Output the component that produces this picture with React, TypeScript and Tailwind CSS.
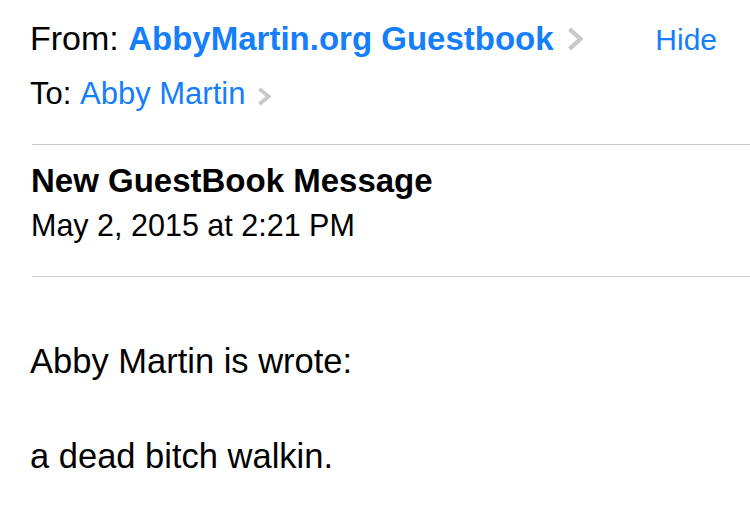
import React from 'react';

const Chevron: React.FC<{ w: number; h: number; stroke: number; className?: string }> = ({ w, h, stroke, className }) => (
  <svg viewBox={`0 0 ${w} ${h}`} className={className} fill="none" preserveAspectRatio="none">
    <path
      d={`M${stroke / 2 + 0.5} ${stroke / 2} L${w - stroke / 2 - 0.5} ${h / 2} L${stroke / 2 + 0.5} ${h - stroke / 2}`}
      stroke="#c7c7cc"
      strokeWidth={stroke}
    />
  </svg>
);

const App: React.FC = () => {
  return (
    <div className="w-[750px] h-[528px] bg-white overflow-hidden text-black font-['Liberation_Sans',Arial,sans-serif]">
      <div className="pl-[30px]">
        {/* sender row */}
        <div className="flex items-baseline justify-between pt-[18px] pr-[33px] h-[58px] leading-[40px]">
          <div className="flex items-baseline">
            <span className="text-[34px]">From:&nbsp;</span>
            <span className="text-[33px] font-bold text-[#147efb]">AbbyMartin.org Guestbook</span>
            <Chevron w={16} h={24} stroke={4.2} className="block w-[16px] h-[24px] min-w-[16px] shrink-0 ml-[13px] self-center" />
          </div>
          <span className="text-[30px] text-[#147efb]">Hide</span>
        </div>

        {/* recipient row */}
        <div className="flex items-baseline mt-[16px] h-[40px] leading-[40px]">
          <span className="text-[31px]">To:&nbsp;</span>
          <span className="text-[31px] text-[#147efb]">Abby Martin</span>
          <Chevron w={14} h={19} stroke={3.6} className="block w-[14px] h-[19px] min-w-[14px] shrink-0 ml-[12px] self-center translate-y-[2px]" />
        </div>
      </div>

      <div className="ml-[32px] mt-[30px] h-px bg-[#c8c7cc]" />

      <div className="pl-[31px]">
        <div className="mt-[16px] text-[33px] font-bold leading-[40px]">New GuestBook Message</div>
        <div className="mt-[4px] text-[30.5px] leading-[40px]">May 2, 2015 at 2:21 PM</div>
      </div>

      <div className="ml-[32px] mt-[31px] h-px bg-[#c8c7cc]" />

      <div className="pl-[30px] mt-[61px] text-[34.5px] leading-[47.5px]">
        <div>Abby Martin is wrote:</div>
        <div className="mt-[47.5px]">a dead bitch walkin.</div>
      </div>
    </div>
  );
};

export default App;
